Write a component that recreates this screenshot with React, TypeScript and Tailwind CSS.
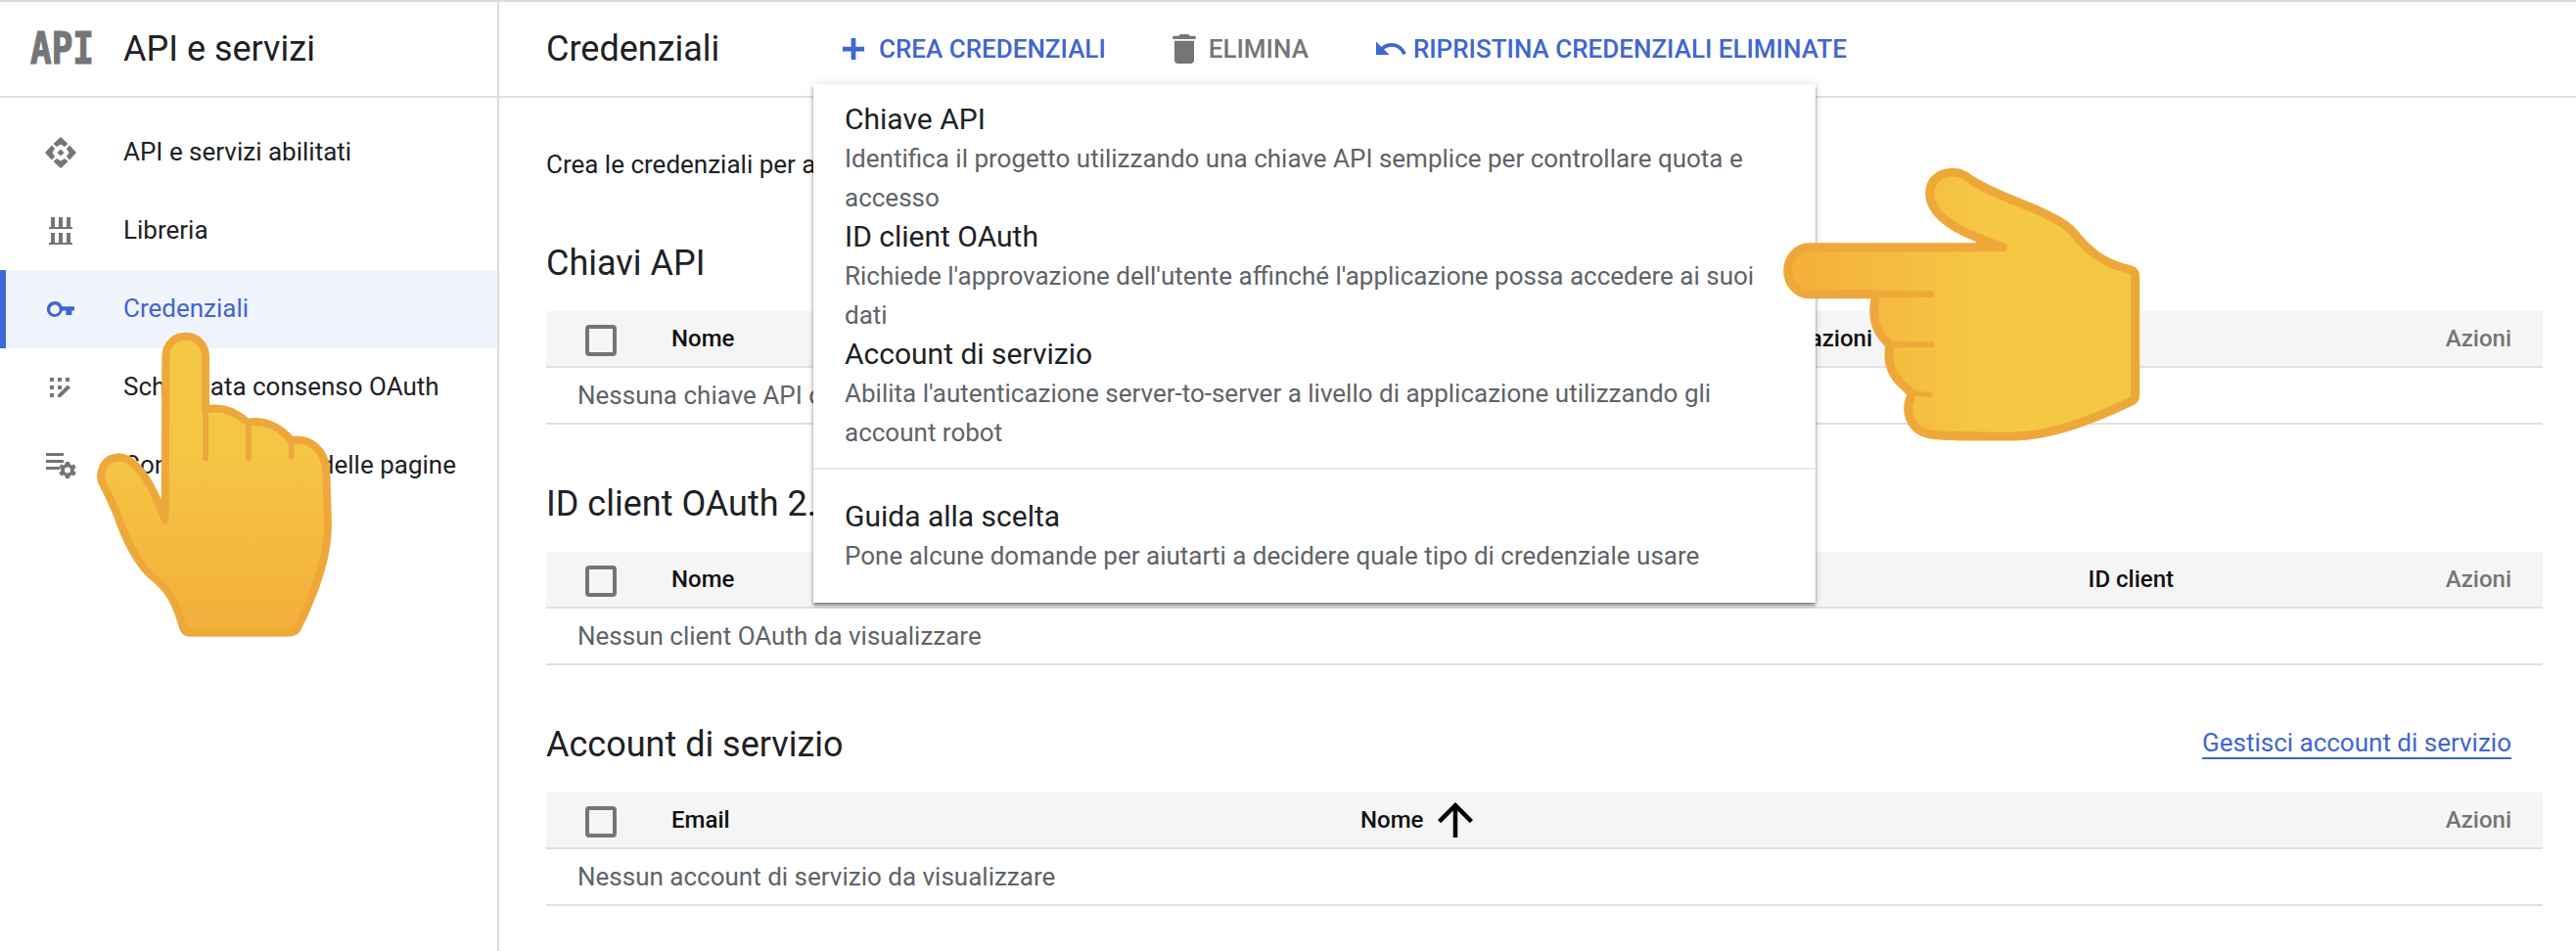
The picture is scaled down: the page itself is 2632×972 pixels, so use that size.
import React from "react";

const BLUE = "#3f66d3";

function Svg({ d, className, fill = "#757575" }: { d: string; className: string; fill?: string }) {
  return (
    <svg viewBox="0 0 24 24" className={className}>
      <path d={d} fill={fill} />
    </svg>
  );
}

function EnabledIcon() {
  return (
    <svg viewBox="0 0 32 32" className="h-[32px] w-[32px]">
      <g fill="#757575">
        <path d="M16 0l7.500 7-3.500 3-4-2.500-4 2.500-3.500-3z" />
        <path d="M16 32l-7.500-7 3.500-3 4 2.500 4-2.500 3.500 3z" />
        <path d="M0 16l7-7.500 3 3.500-2.500 4 2.500 4-3 3.500z" />
        <path d="M32 16l-7-7.500-3 3.500 2.500 4-2.500 4 3 3.500z" />
        <path d="M16 12.500l3.500 3.500-3.500 3.500-3.500-3.500z" />
      </g>
    </svg>
  );
}

function LibraryIcon() {
  return (
    <svg viewBox="0 0 24 28" className="h-[28px] w-[24px]">
      <g fill="#757575">
        <rect x="2" y="0" width="4" height="10" />
        <rect x="10" y="0" width="4" height="10" />
        <rect x="18" y="0" width="4" height="10" />
        <rect x="0" y="10" width="24" height="2" />
        <rect x="2" y="16" width="4" height="10" />
        <rect x="10" y="16" width="4" height="10" />
        <rect x="18" y="16" width="4" height="10" />
        <rect x="0" y="26" width="24" height="2" />
      </g>
    </svg>
  );
}

function KeyIcon() {
  return (
    <svg viewBox="0 0 28 17" className="h-[17px] w-[28px]">
      <path
        fillRule="evenodd"
        fill={BLUE}
        d="M8 0a8 8 0 0 1 7.500 5.200H28v4.400h-2.600V14h-6V9.600h-3.700A8 8 0 1 1 8 0zm0 3.600a4.600 4.600 0 1 0 0 9.600 4.600 4.600 0 0 0 0-9.600z"
      />
    </svg>
  );
}

function ConsentIcon() {
  return (
    <svg viewBox="0 0 22 20" className="h-[20px] w-[22px]">
      <g fill="#757575">
        <rect x="0" y="0" width="4" height="4" />
        <rect x="8" y="0" width="4" height="4" />
        <rect x="16" y="0" width="4" height="4" />
        <rect x="0" y="8" width="4" height="4" />
        <rect x="8" y="8" width="4" height="4" />
        <rect x="0" y="16" width="4" height="4" />
        <path d="M8 17.500L18 7.500l3 2.800L11 20H8z" />
      </g>
    </svg>
  );
}

function PageSettingsIcon() {
  return (
    <svg viewBox="0 0 31 31" className="mt-[5px] h-[31px] w-[31px]">
      <g fill="#757575">
        <rect x="0" y="0" width="18" height="3" />
        <rect x="0" y="7" width="18" height="3" />
        <rect x="0" y="14" width="14" height="3" />
        <path
          fillRule="evenodd"
          d="M20 9h4l.6 2.600 1.600.8 2.500-1 2 3.400-2 1.700v1.900l2 1.700-2 3.400-2.500-1-1.600.9L24 26h-4l-.6-2.600-1.600-.9-2.500 1-2-3.400 2-1.700v-1.900l-2-1.700 2-3.400 2.500 1 1.600-.8zm2 5.500a3 3 0 1 0 0 6 3 3 0 0 0 0-6z"
        />
      </g>
    </svg>
  );
}

function NavItem({ icon, label, active }: { icon: React.ReactNode; label: string; active?: boolean }) {
  return (
    <div
      className={
        active
          ? "flex h-[80px] items-center border-l-[6px] border-[#3f66d3] bg-[#f0f4fd] text-[#3f66d3]"
          : "flex h-[80px] items-center border-l-[6px] border-transparent text-[#202124]"
      }
    >
      <div className="flex w-[120px] justify-center pr-[8px]">{icon}</div>
      <span className="pb-[2px] text-[26px] leading-none">{label}</span>
    </div>
  );
}

function Checkbox() {
  return <div className="ml-[40px] mt-[4px] h-[32px] w-[32px] rounded-[4px] border-[4px] border-[#757575]" />;
}

function Table({ first, mid, empty, midClass, sorted }: { first: string; mid?: string; empty: string; midClass: string; sorted?: boolean }) {
  return (
    <div>
      <div className="flex h-[58px] items-center border-b-2 border-[#e0e0e0] bg-[#f5f5f5] text-[24px] font-medium">
        <Checkbox />
        <span className="ml-[56px] w-[704px] text-[#111]">{first}</span>
        <div className={midClass}>
          {mid && (
            <span className="flex items-center text-[#111]">
              {mid}
              {sorted && (
                <svg viewBox="0 0 24 24" className="ml-[6px] h-[54px] w-[54px]">
                  <path d="M4 12l1.410 1.410L11 7.830V20h2V7.830l5.580 5.590L20 12l-8-8-8 8z" fill="#000" />
                </svg>
              )}
            </span>
          )}
        </div>
        <span className="ml-auto mr-[32px] text-[#757575]">Azioni</span>
      </div>
      <div className="flex h-[58px] items-center border-b-2 border-[#e0e0e0] pl-[32px] text-[26px] text-[#5f6368]">{empty}</div>
    </div>
  );
}

function MenuItem({ title, desc }: { title: string; desc: string }) {
  return (
    <div>
      <div className="text-[30px] leading-[40px] text-[#202124]">{title}</div>
      <div className="text-[26px] leading-[40px] text-[#5f6368]">{desc}</div>
    </div>
  );
}

function HandLeft() {
  return (
    <svg viewBox="0 0 1380 960" className="absolute left-[1780px] top-[148px] h-[320px] w-[460px]">
      <defs>
        <linearGradient id="hl" x1="0" x2="1" y1="0" y2="0">
          <stop offset="0" stopColor="#f4af3b" />
          <stop offset="0.6" stopColor="#f5c844" />
          <stop offset="1" stopColor="#f5c844" />
        </linearGradient>
      </defs>
      <path
        d="M205 308H800L725 280C660 255 577 210 575 145C575 85 640 65 682 88C740 130 820 160 900 192C950 215 990 235 1015 262C1060 320 1110 360 1190 377Q1205 382 1205 397V765Q1205 775 1190 782C1100 825 950 888 830 888C700 888 600 888 570 880C525 870 505 830 510 790L520 755C490 730 450 700 450 640L452 607C425 580 400 550 405 490L410 452H205C170 452 140 420 140 380C140 340 170 308 205 308Z"
        fill="url(#hl)"
        stroke="#eea83a"
        strokeWidth="27"
        strokeLinejoin="round"
      />
      <g stroke="#eea83a" strokeLinecap="round" fill="none">
        <path d="M410 452H580" strokeWidth="20" />
        <path d="M455 607H582" strokeWidth="18" />
        <path d="M520 755L576 761" strokeWidth="16" />
        <path d="M725 295L805 308" strokeWidth="18" />
      </g>
    </svg>
  );
}

function HandUp() {
  return (
    <svg viewBox="0 0 810 990" className="absolute left-[90px] top-[328px] h-[330px] w-[270px]">
      <defs>
        <linearGradient id="hu" x1="0" x2="0" y1="0" y2="1">
          <stop offset="0" stopColor="#f5c844" />
          <stop offset="0.4" stopColor="#f5c544" />
          <stop offset="1" stopColor="#f3ae3b" />
        </linearGradient>
      </defs>
      <path
        d="M236 605L238 105C238 20 360 20 360 105V265C420 255 450 275 490 305C540 295 590 320 622 360C680 350 725 390 730 450L735 620C735 720 690 840 640 940Q632 950 612 950H310Q295 950 290 930C270 860 250 820 200 780C150 740 110 650 90 590C75 555 60 520 48 500C30 470 40 415 95 412C150 415 200 500 236 605Z"
        fill="url(#hu)"
        stroke="#eea83a"
        strokeWidth="24"
        strokeLinejoin="round"
      />
      <g stroke="#eea83a" strokeLinecap="round" fill="none">
        <path d="M360 270V415" strokeWidth="18" />
        <path d="M492 305V415" strokeWidth="18" />
        <path d="M623 360V410" strokeWidth="16" />
      </g>
    </svg>
  );
}

export default function App() {
  return (
    <div className="relative flex h-[972px] w-[2632px] overflow-hidden border-t-2 border-[#dadce0] bg-white font-['Roboto',sans-serif]">
      <aside className="w-[510px] shrink-0 border-r-2 border-[#dadce0]">
        <div className="flex h-[98px] items-center border-b-2 border-[#e0e0e0]">
          <span className="ml-[31px] w-[95px] origin-left scale-y-[1.230] font-['DejaVu_Sans_Mono',monospace] text-[36px] font-bold leading-none text-[#757575] [-webkit-text-stroke:1px_#757575]">
            API
          </span>
          <span className="text-[36px] leading-none text-[#202124]">API e servizi</span>
        </div>
        <nav className="pt-[16px]">
          <NavItem icon={<EnabledIcon />} label="API e servizi abilitati" />
          <NavItem icon={<LibraryIcon />} label="Libreria" />
          <NavItem icon={<KeyIcon />} label="Credenziali" active />
          <NavItem icon={<ConsentIcon />} label="Schermata consenso OAuth" />
          <NavItem icon={<PageSettingsIcon />} label="Contratti sull'uso delle pagine" />
        </nav>
      </aside>

      <main className="min-w-0 flex-1">
        <div className="flex h-[98px] items-center border-b-2 border-[#e0e0e0] pl-[48px]">
          <span className="w-[295px] text-[36px] leading-none text-[#202124]">Credenziali</span>
          <div className="flex items-center text-[26px] font-medium leading-none text-[#3f66d3]">
            <Svg d="M19 13.500h-5.500V19h-3v-5.500H5v-3h5.500V5h3v5.500H19z" className="h-[38px] w-[38px]" fill={BLUE} />
            <span className="ml-[7px]">CREA CREDENZIALI</span>
          </div>
          <div className="ml-[60px] flex items-center text-[26px] font-medium leading-none text-[#757575]">
            <Svg d="M6 19c0 1.100.9 2 2 2h8c1.100 0 2-.9 2-2V7H6v12zM19 4h-3.500l-1-1h-5l-1 1H5v2h14V4z" className="h-[40px] w-[40px]" />
            <span className="ml-[5px]">ELIMINA</span>
          </div>
          <div className="ml-[66px] flex items-center text-[26px] font-medium leading-none text-[#3f66d3]">
            <Svg d="M12.500 8c-2.650 0-5.050.99-6.900 2.600L2 7v9h9l-3.620-3.620c1.390-1.160 3.160-1.880 5.120-1.880 3.540 0 6.550 2.310 7.600 5.500l2.370-.78C21.080 11.030 17.150 8 12.500 8z" className="h-[36px] w-[36px]" fill={BLUE} />
            <span className="ml-[5px]">RIPRISTINA CREDENZIALI ELIMINATE</span>
          </div>
        </div>

        <div className="pl-[48px] pr-[34px]">
          <div className="flex h-[138px] items-center pb-[2px] text-[26px] text-[#202124]">Crea le credenziali per accedere alle API abilitate.</div>

          <h2 className="mb-[20px] flex h-[60px] items-center pt-[2px] text-[36px] font-normal text-[#202124]">Chiavi API</h2>
          <Table first="Nome" mid="Limitazioni" midClass="flex w-[523px] justify-end" empty="Nessuna chiave API da visualizzare" />

          <h2 className="mb-[20px] mt-[50px] flex h-[60px] items-center pt-[2px] text-[36px] font-normal text-[#202124]">ID client OAuth 2.0</h2>
          <Table first="Nome" mid="ID client" midClass="flex w-[831px] justify-end" empty="Nessun client OAuth da visualizzare" />

          <div className="mb-[20px] mt-[50px] flex h-[60px] items-center justify-between">
            <h2 className="pt-[2px] text-[36px] font-normal text-[#202124]">Account di servizio</h2>
            <a className="mr-[32px] border-b-2 border-[#3f66d3] text-[26px] leading-[30px] text-[#3f66d3]">Gestisci account di servizio</a>
          </div>
          <Table first="Email" mid="Nome" sorted midClass="" empty="Nessun account di servizio da visualizzare" />
        </div>
      </main>

      <div className="absolute left-[831px] top-[84px] w-[1024px] bg-white pt-[16px] shadow-[0_3px_3px_rgba(0,0,0,0.4),0_0_8px_rgba(0,0,0,0.15)]">
        <div className="px-[32px] pb-[16px]">
          <MenuItem title="Chiave API" desc="Identifica il progetto utilizzando una chiave API semplice per controllare quota e accesso" />
          <MenuItem title="ID client OAuth" desc="Richiede l'approvazione dell'utente affinché l'applicazione possa accedere ai suoi dati" />
          <MenuItem title="Account di servizio" desc="Abilita l'autenticazione server-to-server a livello di applicazione utilizzando gli account robot" />
        </div>
        <div className="border-t-2 border-[#e8eaed] px-[32px] pb-[28px] pt-[28px]">
          <MenuItem title="Guida alla scelta" desc="Pone alcune domande per aiutarti a decidere quale tipo di credenziale usare" />
        </div>
      </div>

      <HandUp />
      <HandLeft />
    </div>
  );
}
